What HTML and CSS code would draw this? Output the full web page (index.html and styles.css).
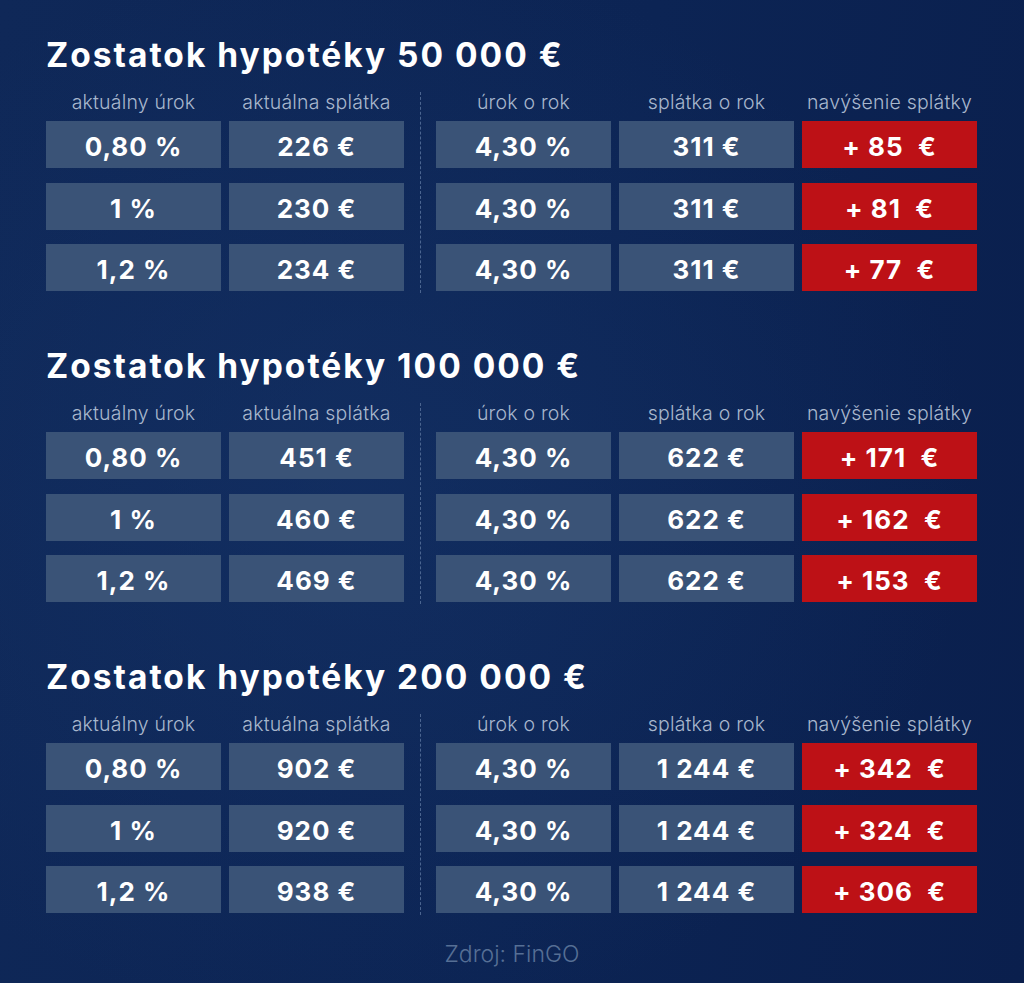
FILE: index.html
```html
<!DOCTYPE html>
<html lang="sk">
<head>
<meta charset="utf-8">
<title>Zostatok hypotéky</title>
<link rel="stylesheet" href="styles.css">
</head>
<body>
<main class="page">
  <section class="block">
    <h2 class="title">Zostatok hypotéky 50 000 €</h2>
    <div class="grid">
      <div class="sep"></div>
      <div class="hd">aktuálny úrok</div>
      <div class="hd">aktuálna splátka</div>
      <div class="hd">úrok o rok</div>
      <div class="hd">splátka o rok</div>
      <div class="hd">navýšenie splátky</div>

      <div class="cell">0,80 %</div><div class="cell">226 €</div><div class="cell">4,30 %</div><div class="cell">311 €</div><div class="cell red">+ 85 &nbsp;€</div>
      <div class="cell">1 %</div><div class="cell">230 €</div><div class="cell">4,30 %</div><div class="cell">311 €</div><div class="cell red">+ 81 &nbsp;€</div>
      <div class="cell">1,2 %</div><div class="cell">234 €</div><div class="cell">4,30 %</div><div class="cell">311 €</div><div class="cell red">+ 77 &nbsp;€</div>
    </div>
  </section>

  <section class="block">
    <h2 class="title">Zostatok hypotéky 100 000 €</h2>
    <div class="grid">
      <div class="sep"></div>
      <div class="hd">aktuálny úrok</div>
      <div class="hd">aktuálna splátka</div>
      <div class="hd">úrok o rok</div>
      <div class="hd">splátka o rok</div>
      <div class="hd">navýšenie splátky</div>

      <div class="cell">0,80 %</div><div class="cell">451 €</div><div class="cell">4,30 %</div><div class="cell">622 €</div><div class="cell red">+ 171 &nbsp;€</div>
      <div class="cell">1 %</div><div class="cell">460 €</div><div class="cell">4,30 %</div><div class="cell">622 €</div><div class="cell red">+ 162 &nbsp;€</div>
      <div class="cell">1,2 %</div><div class="cell">469 €</div><div class="cell">4,30 %</div><div class="cell">622 €</div><div class="cell red">+ 153 &nbsp;€</div>
    </div>
  </section>

  <section class="block">
    <h2 class="title">Zostatok hypotéky 200 000 €</h2>
    <div class="grid">
      <div class="sep"></div>
      <div class="hd">aktuálny úrok</div>
      <div class="hd">aktuálna splátka</div>
      <div class="hd">úrok o rok</div>
      <div class="hd">splátka o rok</div>
      <div class="hd">navýšenie splátky</div>

      <div class="cell">0,80 %</div><div class="cell">902 €</div><div class="cell">4,30 %</div><div class="cell">1 244 €</div><div class="cell red">+ 342 &nbsp;€</div>
      <div class="cell">1 %</div><div class="cell">920 €</div><div class="cell">4,30 %</div><div class="cell">1 244 €</div><div class="cell red">+ 324 &nbsp;€</div>
      <div class="cell">1,2 %</div><div class="cell">938 €</div><div class="cell">4,30 %</div><div class="cell">1 244 €</div><div class="cell red">+ 306 &nbsp;€</div>
    </div>
  </section>

  <footer class="source">Zdroj: FinGO</footer>
</main>
</body>
</html>
```

FILE: styles.css
```css
html, body {
  margin: 0;
  padding: 0;
}

body {
  width: 1024px;
  height: 983px;
  overflow: hidden;
  background:
    radial-gradient(ellipse 60% 55% at 35% 50%, rgba(24, 56, 110, 0.45) 0%, rgba(24, 56, 110, 0) 100%),
    linear-gradient(100deg, #0f2858 0%, #0c2454 55%, #0a1f4d 100%);
  font-family: Inter, "Noto Sans", "Liberation Sans", sans-serif;
  color: #ffffff;
}

.page {
  padding: 33px 0 0 46px;
}

.block {
  margin-bottom: 38.5px;
}

.title {
  margin: 0 0 13px 0;
  font-size: 33.5px;
  line-height: 44px;
  font-weight: 700;
  letter-spacing: 2px;
  color: #ffffff;
}

.grid {
  display: grid;
  grid-template-columns: 175px 175px 16px 175px 175px 175px;
  column-gap: 8px;
}

.sep {
  grid-column: 3;
  grid-row: 1 / span 4;
  justify-self: center;
  width: 0;
  margin-top: 2px;
  margin-bottom: 12.5px;
  border-left: 1px dashed #4b6590;
}

.hd {
  height: 24px;
  margin-bottom: 7px;
  text-align: center;
  font-size: 19.5px;
  line-height: 24px;
  font-weight: 300;
  letter-spacing: 0.2px;
  color: #a8b7cd;
  white-space: nowrap;
}

.cell {
  box-sizing: border-box;
  height: 47px;
  margin-bottom: 14.5px;
  padding-top: 5px;
  background: #3a5377;
  text-align: center;
  font-size: 26px;
  line-height: 42px;
  font-weight: 700;
  letter-spacing: 1px;
  color: #ffffff;
  white-space: nowrap;
}

.cell.red {
  background: #bd1116;
}

.source {
  width: 932px;
  margin-top: -27px;
  text-align: center;
  font-size: 23px;
  line-height: 30px;
  font-weight: 300;
  color: #566f95;
}
```
